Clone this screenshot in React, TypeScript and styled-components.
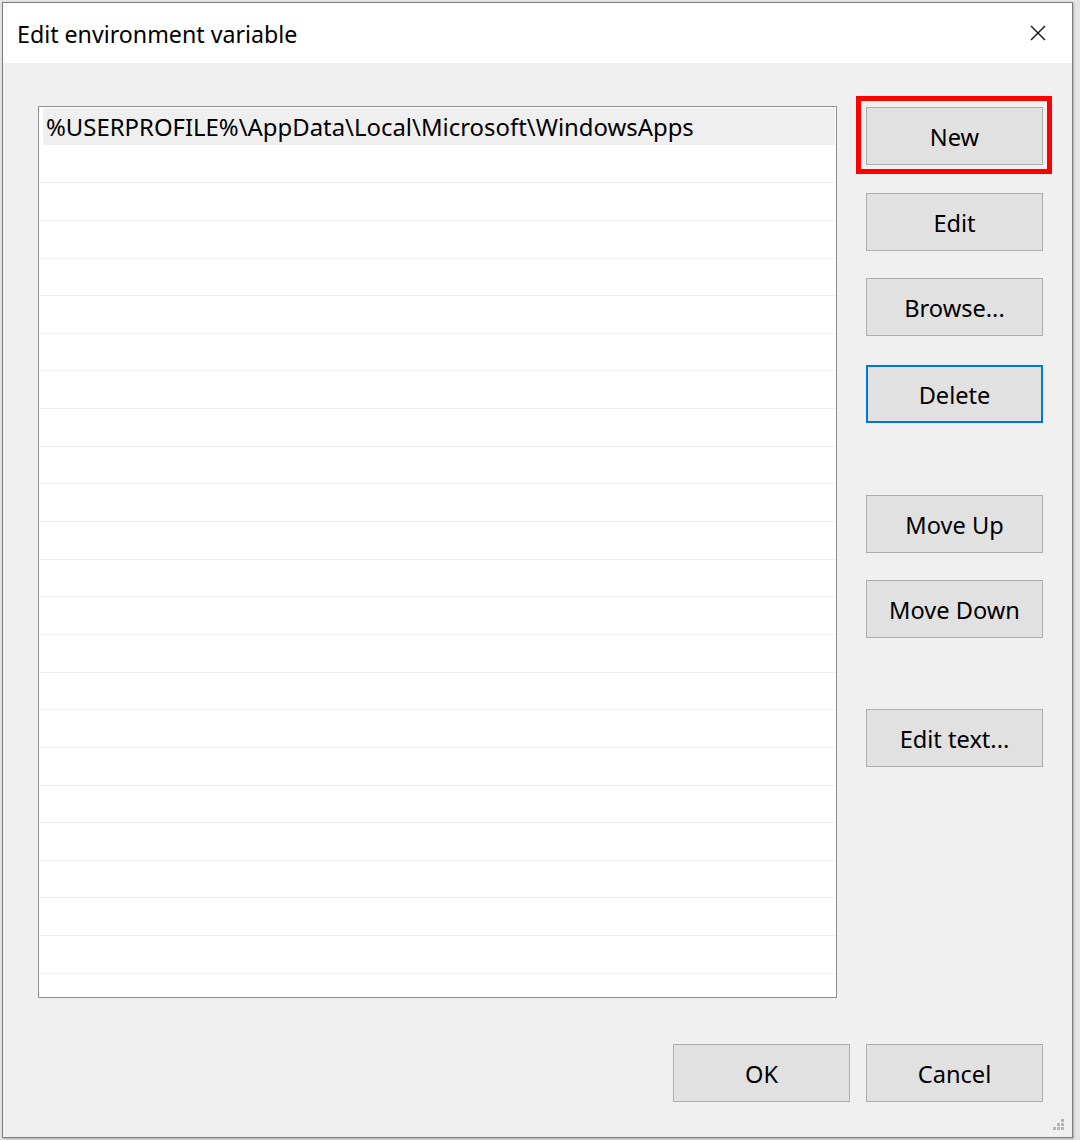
import React from "react";
import styled, { createGlobalStyle } from "styled-components";

const Global = createGlobalStyle`
  html, body { margin: 0; padding: 0; }
  body {
    background: #e4e4e4;
    font-family: "Noto Sans", "Open Sans", sans-serif;
    color: #000;
  }
`;

const Page = styled.div`
  width: 1080px;
  height: 1140px;
  padding: 2px 0 0 2px;
  box-sizing: border-box;
  overflow: hidden;
`;

const Window = styled.div`
  position: relative;
  width: 1071px;
  height: 1136px;
  box-sizing: border-box;
  border: 1px solid #7c7c7c;
  display: flex;
  flex-direction: column;
  background: #f0f0f0;
  box-shadow: 1px 1px 2px rgba(0, 0, 0, 0.25);
`;

const TitleBar = styled.div`
  height: 60px;
  flex: none;
  background: #ffffff;
  display: flex;
  align-items: center;
  justify-content: space-between;
  padding: 0 26px 0 14px;
`;

const Title = styled.div`
  font-size: 23.2px;
  line-height: 1;
  padding-top: 3px;
`;

const CloseIcon = styled.svg`
  width: 16px;
  height: 16px;
  display: block;
`;

const Content = styled.div`
  flex: 1;
  display: flex;
  flex-direction: column;
`;

const Main = styled.div`
  display: flex;
  gap: 29px;
  padding: 43px 28px 0 35px;
`;

const ListBox = styled.div`
  width: 799px;
  height: 892px;
  box-sizing: border-box;
  border: 1px solid #8f8f8f;
  background: #ffffff;
  padding: 1px 1px 0 1px;
  overflow: hidden;
`;

const Row = styled.div<{ $selected?: boolean }>`
  height: 37.65px;
  box-sizing: border-box;
  border-bottom: 1px solid ${(p) => (p.$selected ? "#ffffff" : "#eeeeee")};
  background: ${(p) => (p.$selected ? "#efefef" : "#ffffff")};
  margin-left: ${(p) => (p.$selected ? "3px" : "0")};
  padding-left: ${(p) => (p.$selected ? "3px" : "7px")};
  padding-top: 1px;
  display: flex;
  align-items: center;
  font-size: 23.9px;
  white-space: nowrap;
`;

const ButtonColumn = styled.div`
  display: flex;
  flex-direction: column;
  padding-top: 1px;
  width: 177px;
`;

const HighlightFrame = styled.div`
  position: relative;
`;

const RedBox = styled.div`
  position: absolute;
  left: -10px;
  top: -11px;
  right: -9px;
  bottom: -9px;
  border: 5px solid #ff0000;
  pointer-events: none;
`;

const Button = styled.div<{ $focused?: boolean; $gapBefore?: number }>`
  width: 177px;
  height: 58px;
  box-sizing: border-box;
  margin-top: ${(p) => p.$gapBefore ?? 0}px;
  background: #e1e1e1;
  border: ${(p) => (p.$focused ? "2px solid #0078d7" : "1px solid #adadad")};
  display: flex;
  align-items: center;
  justify-content: center;
  font-size: 23.6px;
  line-height: 1;
  padding-top: 3px;
  white-space: nowrap;
`;

const Footer = styled.div`
  display: flex;
  justify-content: flex-end;
  gap: 16px;
  padding: 46px 29px 0 0;
`;

const Grip = styled.svg`
  position: absolute;
  right: 6px;
  bottom: 5px;
  width: 16px;
  height: 16px;
`;

const rows = Array.from({ length: 24 });

export default function App() {
  return (
    <>
      <Global />
      <Page>
        <Window>
          <TitleBar>
            <Title>Edit environment variable</Title>
            <CloseIcon viewBox="0 0 16 16">
              <path d="M1 1 L15 15 M15 1 L1 15" stroke="#111" strokeWidth="1.4" fill="none" />
            </CloseIcon>
          </TitleBar>
          <Content>
            <Main>
              <ListBox>
                {rows.map((_, i) => (
                  <Row key={i} $selected={i === 0}>
                    {i === 0 ? "%USERPROFILE%\\AppData\\Local\\Microsoft\\WindowsApps" : ""}
                  </Row>
                ))}
              </ListBox>
              <ButtonColumn>
                <HighlightFrame>
                  <Button>New</Button>
                  <RedBox />
                </HighlightFrame>
                <Button $gapBefore={28}>Edit</Button>
                <Button $gapBefore={27}>Browse...</Button>
                <Button $gapBefore={29} $focused>
                  Delete
                </Button>
                <Button $gapBefore={72}>Move Up</Button>
                <Button $gapBefore={27}>Move Down</Button>
                <Button $gapBefore={71}>Edit text...</Button>
              </ButtonColumn>
            </Main>
            <Footer>
              <Button>OK</Button>
              <Button>Cancel</Button>
            </Footer>
          </Content>
          <Grip viewBox="0 0 16 16">
            <rect x="11" y="3" width="3" height="3" fill="#b5b5b5" />
            <rect x="7" y="7" width="3" height="3" fill="#b5b5b5" />
            <rect x="11" y="7" width="3" height="3" fill="#b5b5b5" />
            <rect x="3" y="11" width="3" height="3" fill="#b5b5b5" />
            <rect x="7" y="11" width="3" height="3" fill="#b5b5b5" />
            <rect x="11" y="11" width="3" height="3" fill="#b5b5b5" />
          </Grip>
        </Window>
      </Page>
    </>
  );
}
